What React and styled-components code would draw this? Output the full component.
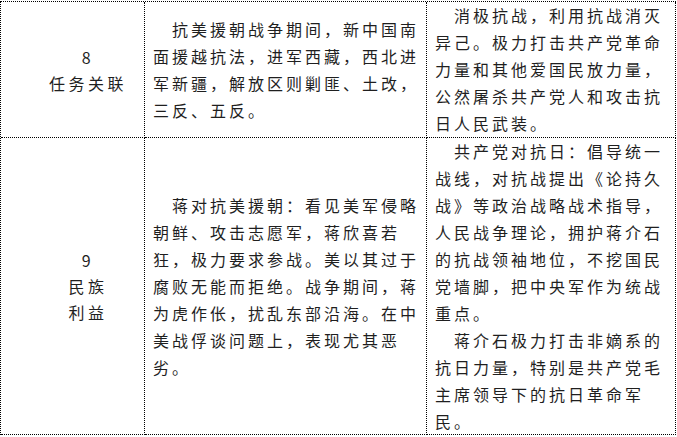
import React from "react";
import styled, { createGlobalStyle } from "styled-components";

const GlobalStyle = createGlobalStyle`
  html, body {
    margin: 0;
    padding: 0;
    background: #ffffff;
  }
  body {
    font-family: "Noto Sans CJK SC", "Noto Sans", sans-serif;
    color: #1f1f1f;
  }
`;

const Page = styled.div`
  padding-top: 1px;
  width: 677px;
`;

const Grid = styled.div`
  display: grid;
  grid-template-columns: 144px 282px 249px;
  grid-template-rows: ${(p) => p.$rows};
  width: 676px;
  box-sizing: border-box;
  border-top: 1px dotted #000;
  border-left: 1px dotted #000;
`;

const Cell = styled.div`
  box-sizing: border-box;
  border-right: 1px dotted #000;
  border-bottom: 1px dotted #000;
  display: flex;
  flex-direction: column;
  justify-content: center;
  overflow: hidden;
  padding: ${(p) => p.$pad || "0 4px 0 8px"};
`;

const LabelText = styled.div`
  font-size: 16px;
  line-height: 26px;
  letter-spacing: 3.5px;
  text-align: center;
  white-space: nowrap;
`;

const Para = styled.p`
  margin: 0;
  font-size: 16px;
  line-height: 27px;
  letter-spacing: 3px;
  white-space: nowrap;
`;

const Line = styled.span`
  display: block;
  padding-left: ${(p) => (p.$indent ? "19px" : "0")};
`;

function Paragraph({ lines }) {
  return (
    <Para>
      {lines.map((l, i) => (
        <Line key={i} $indent={i === 0}>
          {l}
        </Line>
      ))}
    </Para>
  );
}

const rows = [
  {
    num: "8",
    label: ["任务关联"],
    mid: [
      [
        "抗美援朝战争期间，新中国南",
        "面援越抗法，进军西藏，西北进",
        "军新疆，解放区则剿匪、土改，",
        "三反、五反。",
      ],
    ],
    right: [
      [
        "消极抗战，利用抗战消灭",
        "异己。极力打击共产党革命",
        "力量和其他爱国民放力量，",
        "公然屠杀共产党人和攻击抗",
        "日人民武装。",
      ],
    ],
  },
  {
    num: "9",
    label: ["民族", "利益"],
    mid: [
      [
        "蒋对抗美援朝：看见美军侵略",
        "朝鲜、攻击志愿军，蒋欣喜若",
        "狂，极力要求参战。美以其过于",
        "腐败无能而拒绝。战争期间，蒋",
        "为虎作伥，扰乱东部沿海。在中",
        "美战俘谈问题上，表现尤其恶",
        "劣。",
      ],
    ],
    right: [
      [
        "共产党对抗日：倡导统一",
        "战线，对抗战提出《论持久",
        "战》等政治战略战术指导，",
        "人民战争理论，拥护蒋介石",
        "的抗战领袖地位，不挖国民",
        "党墙脚，把中央军作为统战",
        "重点。",
      ],
      [
        "蒋介石极力打击非嫡系的",
        "抗日力量，特别是共产党毛",
        "主席领导下的抗日革命军",
        "民。",
      ],
    ],
  },
];

export default function App() {
  return (
    <>
      <GlobalStyle />
      <Page>
        <Grid $rows="136px 297px">
          {rows.map((r) => (
            <React.Fragment key={r.num}>
              <Cell $pad="0 0 0 31px">
                <LabelText>{r.num}</LabelText>
                {r.label.map((t) => (
                  <LabelText key={t}>{t}</LabelText>
                ))}
              </Cell>
              <Cell>
                {r.mid.map((p, i) => (
                  <Paragraph key={i} lines={p} />
                ))}
              </Cell>
              <Cell $pad="0 4px 0 8px">
                {r.right.map((p, i) => (
                  <Paragraph key={i} lines={p} />
                ))}
              </Cell>
            </React.Fragment>
          ))}
        </Grid>
      </Page>
    </>
  );
}
